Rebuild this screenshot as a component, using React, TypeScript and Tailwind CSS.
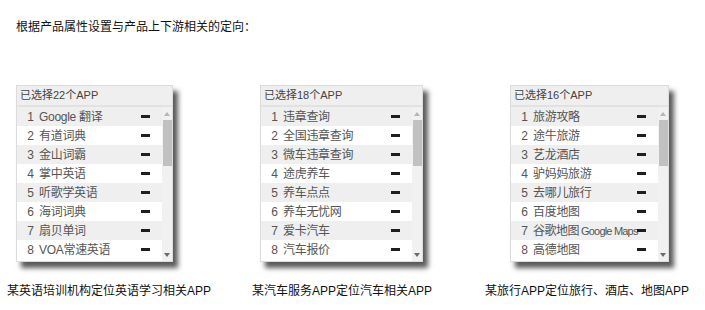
import React from "react";

type Panel = {
  count: number;
  apps: string[];
  caption: string;
  colW: string;
  panelW: string;
  panelMl: string;
};

const panels: Panel[] = [
  {
    count: 22,
    apps: ["Google 翻译", "有道词典", "金山词霸", "掌中英语", "听歌学英语", "海词词典", "扇贝单词", "VOA常速英语"],
    caption: "某英语培训机构定位英语学习相关APP",
    colW: "w-[245px]",
    panelW: "w-[157px]",
    panelMl: "ml-[9px]",
  },
  {
    count: 18,
    apps: ["违章查询", "全国违章查询", "微车违章查询", "途虎养车", "养车点点", "养车无忧网", "爱卡汽车", "汽车报价"],
    caption: "某汽车服务APP定位汽车相关APP",
    colW: "w-[233px]",
    panelW: "w-[163px]",
    panelMl: "ml-[8px]",
  },
  {
    count: 16,
    apps: ["旅游攻略", "途牛旅游", "艺龙酒店", "驴妈妈旅游", "去哪儿旅行", "百度地图", "谷歌地图|Google Maps", "高德地图"],
    caption: "某旅行APP定位旅行、酒店、地图APP",
    colW: "w-[215px]",
    panelW: "w-[159px]",
    panelMl: "ml-[25px]",
  },
];

// long names like "谷歌地图 Google Maps" get a tighter latin part so they fit before the minus
const AppName = ({ name }: { name: string }) => {
  const [cjk, latin] = name.split("|");
  if (!latin) return <>{name}</>;
  return (
    <>
      <span className="tracking-[-0.5px]">{cjk}</span>
      <span className="ml-[2px] text-[11px] tracking-[-0.8px]">{latin}</span>
    </>
  );
};

const AppList = ({ p }: { p: Panel }) => (
  <div className={`${p.panelW} ${p.panelMl} h-[177px] bg-white border border-[#dcdcdc] shadow-[5px_6px_5px_#5a5a5a] flex flex-col`}>
    <div className="h-[21px] bg-[#efefef] border-b-2 border-[#e2e2e2] flex items-center pl-[3px] text-[11px] text-[#444]">
      已选择{p.count}个APP
    </div>
    <div className="flex-1 flex overflow-hidden">
      <div className="flex-1 min-w-0 flex flex-col">
        {p.apps.map((a, i) => (
          <div
            key={a}
            className={`h-[19px] shrink-0 flex items-center pl-[9px] pr-[12px] text-[12px] text-[#555] ${i % 2 === 0 ? "bg-[#efefef]" : "bg-white"}`}
          >
            <span className="w-[8px] text-right shrink-0">{i + 1}</span>
            <span className="ml-[5px] flex-1 min-w-0 whitespace-nowrap tracking-[-0.3px]">
              <AppName name={a} />
            </span>
            <span className="w-[9px] h-[3px] bg-[#1e1e1e] shrink-0" />
          </div>
        ))}
      </div>
      <div className="w-[10px] bg-[#f1f1f1] flex flex-col items-center">
        <div className="h-[13px] flex items-center justify-center">
          <svg width="6" height="4" viewBox="0 0 6 4">
            <path d="M0 4 L3 0 L6 4 Z" fill="#b5b5b5" />
          </svg>
        </div>
        <div className="w-[9px] h-[46px] bg-[#c1c1c1]" />
        <div className="flex-1" />
        <div className="h-[13px] flex items-center justify-center">
          <svg width="6" height="4" viewBox="0 0 6 4">
            <path d="M0 0 L3 4 L6 0 Z" fill="#6a6a6a" />
          </svg>
        </div>
      </div>
    </div>
  </div>
);

export default function App() {
  return (
    <div
      className="w-[705px] h-[310px] bg-white overflow-hidden"
      style={{ fontFamily: '"Liberation Sans", "Noto Sans CJK SC", sans-serif' }}
    >
      <div className="pt-[20px] pl-[16px] text-[12px] leading-[14px] text-[#111]">
        根据产品属性设置与产品上下游相关的定向：
      </div>
      <div className="flex mt-[51px] pl-[7px]">
        {panels.map((p) => (
          <div key={p.count} className={`${p.colW} shrink-0 flex flex-col`}>
            <AppList p={p} />
            <div className="mt-[21px] text-[12px] leading-[16px] text-[#111] whitespace-nowrap">{p.caption}</div>
          </div>
        ))}
      </div>
    </div>
  );
}
